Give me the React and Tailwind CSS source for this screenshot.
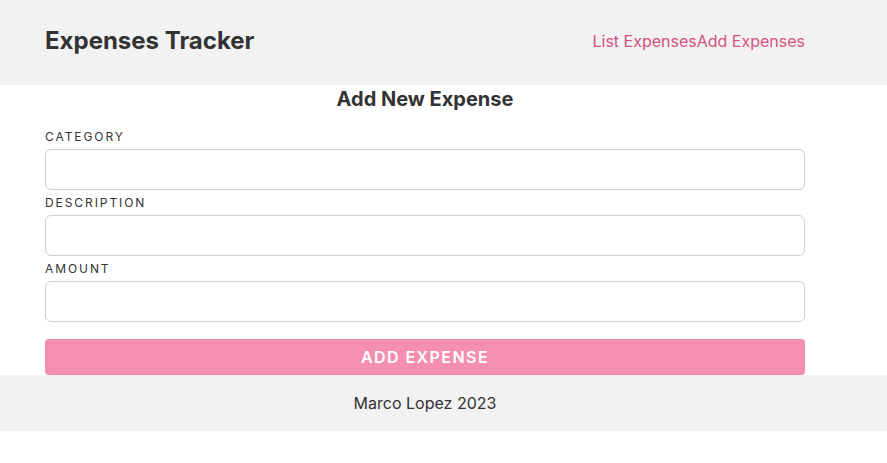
import React from 'react';

const Field = ({ label }) => (
  <div className="mt-[5px] first:mt-0">
    <label className="block text-xs leading-4 tracking-[0.16em] uppercase text-[#333] mb-1">{label}</label>
    <input
      type="text"
      className="block w-full h-[41px] px-3 border border-[#cfcfcf] rounded-md bg-white focus:outline-none"
    />
  </div>
);

export default function App() {
  return (
    <div className="font-['Inter',sans-serif] text-[#333] bg-white min-h-[463px]">
      {/* Header */}
      <header className="bg-[#f2f2f2] h-[85px]">
        <div className="w-[760px] ml-[45px] h-full pb-1 flex items-center justify-between">
          <h1 className="text-2xl font-bold text-[#333]">Expenses Tracker</h1>
          <nav className="flex text-base text-[#d3527f]">
            <a href="#">List Expenses</a>
            <a href="#">Add Expenses</a>
          </nav>
        </div>
      </header>

      {/* Form */}
      <main className="w-[760px] ml-[45px]">
        <h2 className="text-xl leading-7 font-bold text-center">Add New Expense</h2>
        <form className="mt-4" onSubmit={(e) => e.preventDefault()}>
          <Field label="Category" />
          <Field label="Description" />
          <Field label="Amount" />
          <button
            type="submit"
            className="mt-[17px] w-full h-9 rounded bg-[#f48fb1] text-white font-semibold uppercase tracking-[0.09em] text-base"
          >
            Add Expense
          </button>
        </form>
      </main>

      {/* Footer */}
      <footer className="bg-[#f2f2f2] h-14">
        <div className="w-[760px] ml-[45px] h-full flex items-center justify-center text-base">
          Marco Lopez 2023
        </div>
      </footer>
    </div>
  );
}
